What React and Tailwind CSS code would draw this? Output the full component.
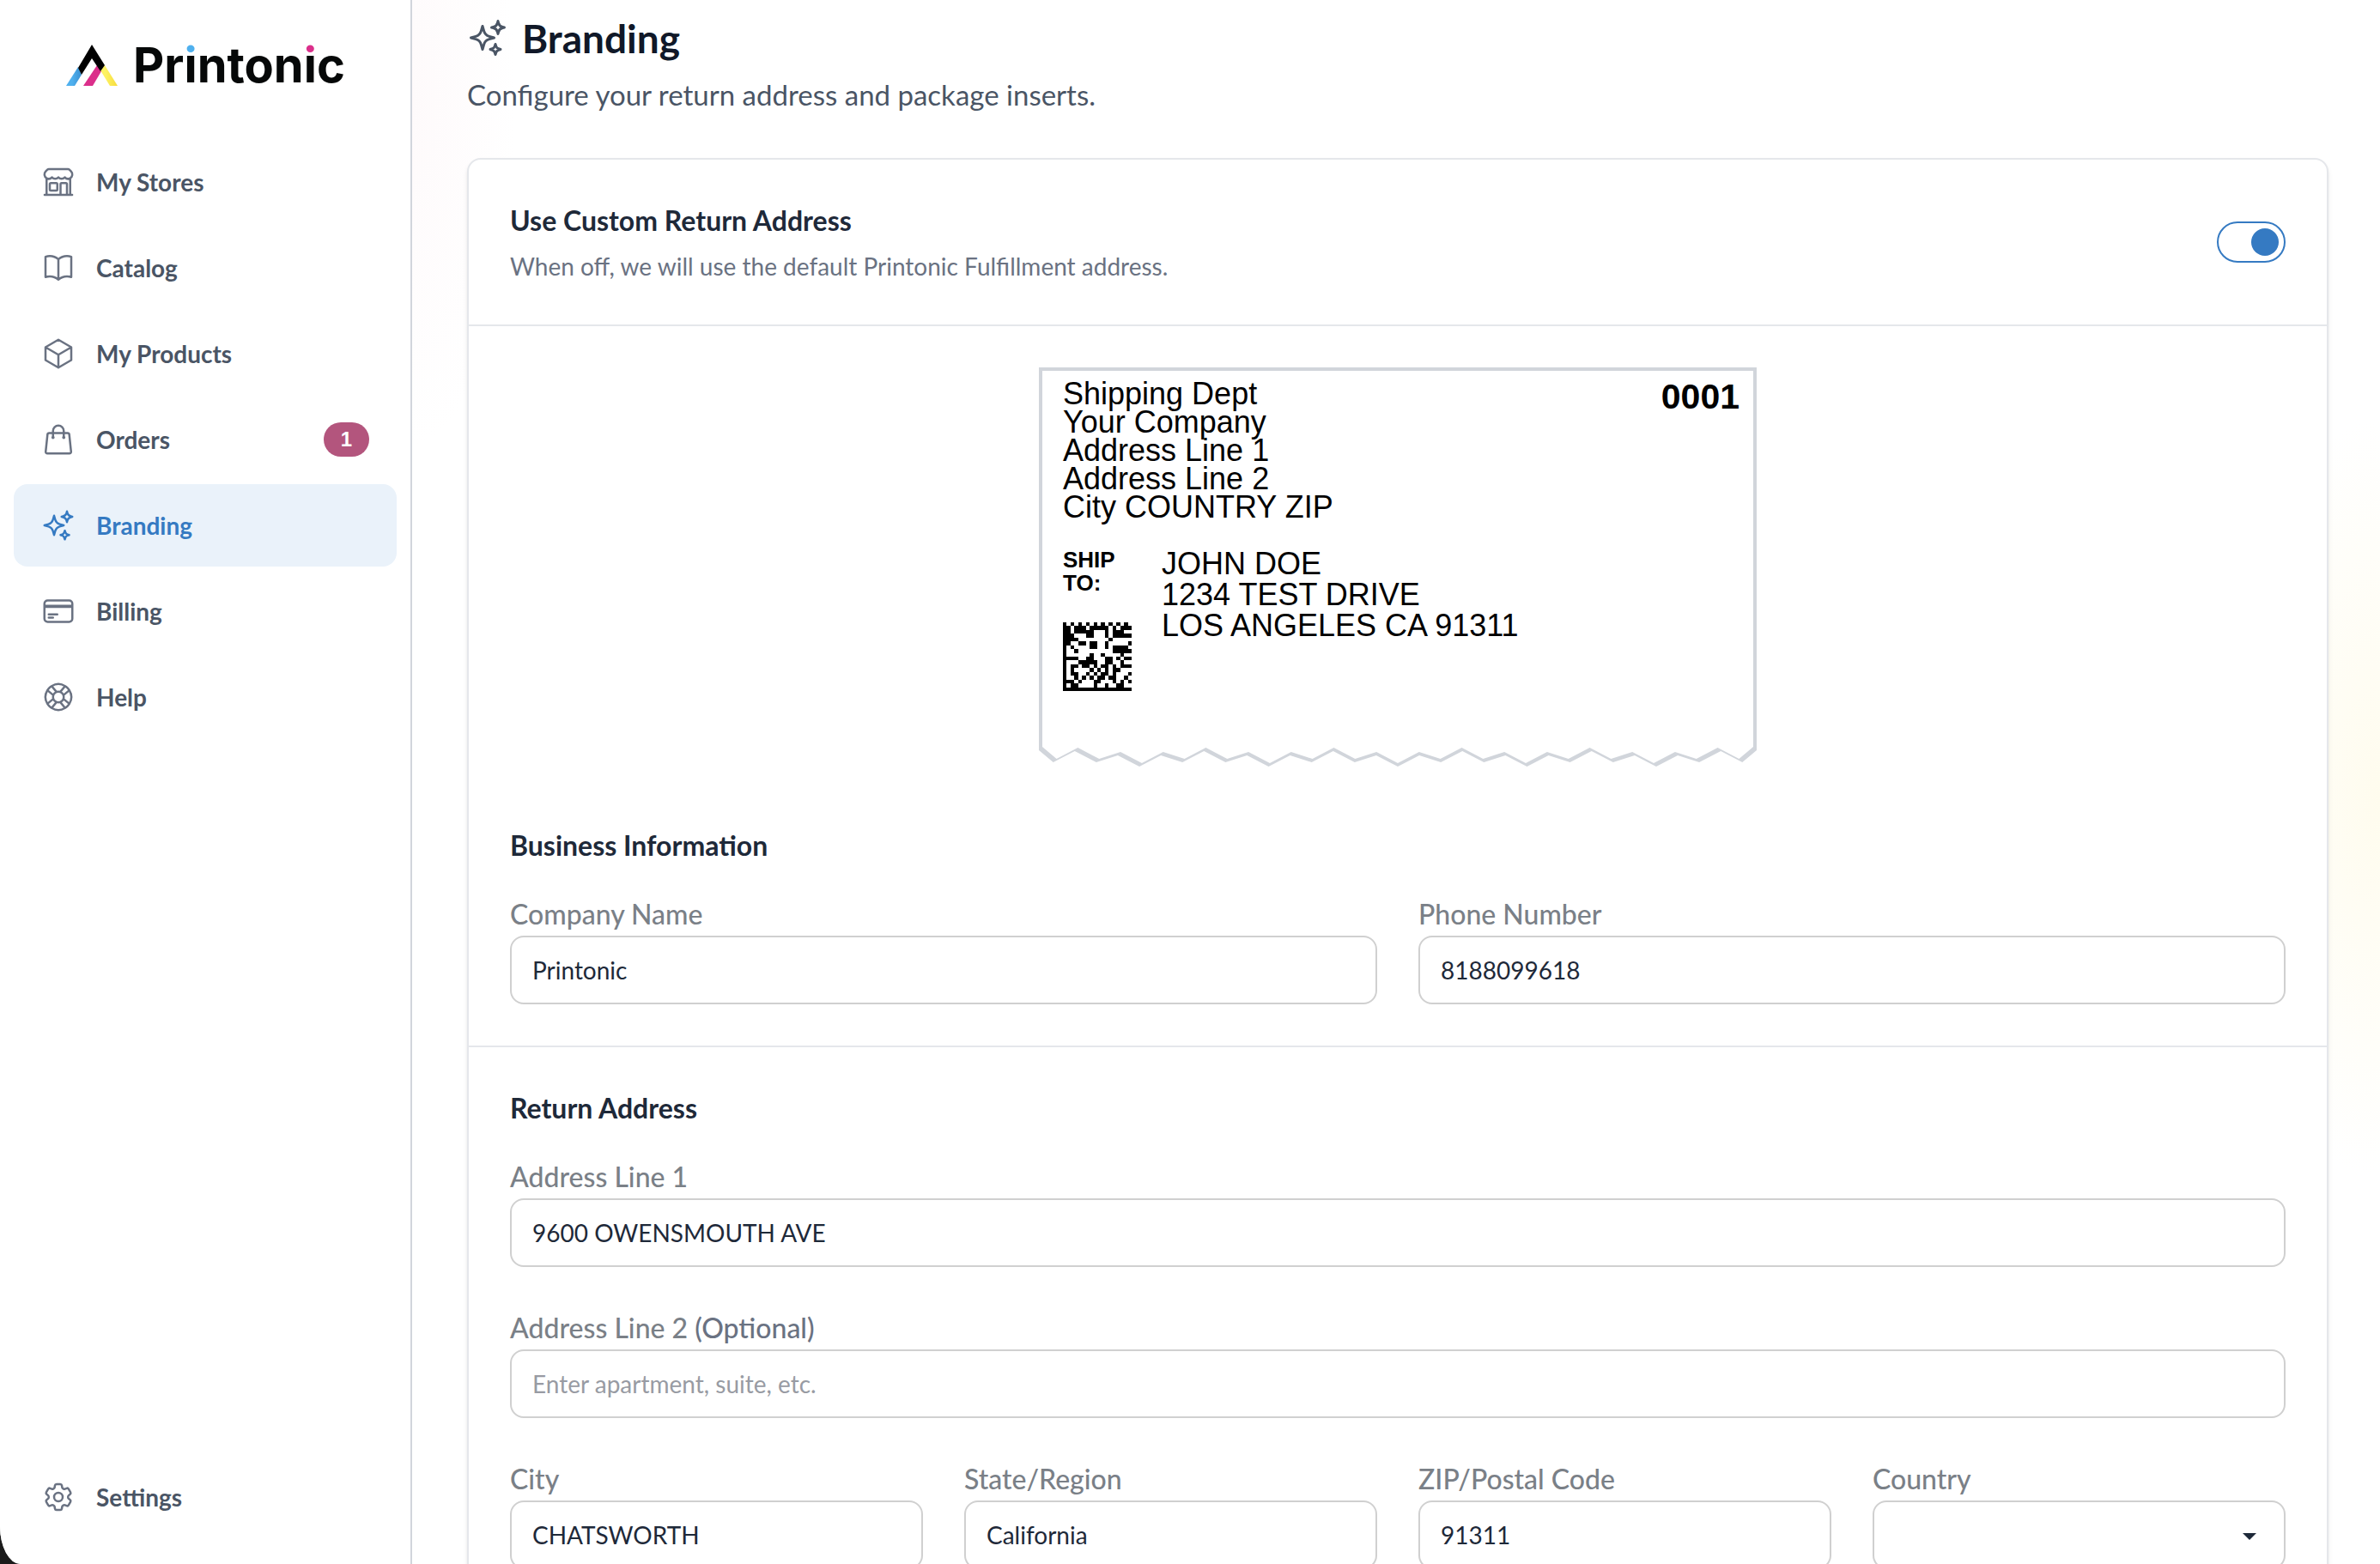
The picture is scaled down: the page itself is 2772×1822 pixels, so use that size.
import { useState } from 'react'
import {
  HiOutlineBookOpen,
  HiOutlineBuildingStorefront,
  HiOutlineCog6Tooth,
  HiOutlineCreditCard,
  HiOutlineCube,
  HiOutlineLifebuoy,
  HiOutlineShoppingBag,
  HiOutlineSparkles,
} from 'react-icons/hi2'

const NAV = [
  { id: 'stores',   label: 'My Stores',   Icon: HiOutlineBuildingStorefront },
  { id: 'catalog',  label: 'Catalog',     Icon: HiOutlineBookOpen },
  { id: 'products', label: 'My Products', Icon: HiOutlineCube },
  { id: 'orders',   label: 'Orders',      Icon: HiOutlineShoppingBag, count: 1 },
  { id: 'branding', label: 'Branding',    Icon: HiOutlineSparkles },
  { id: 'billing',  label: 'Billing',     Icon: HiOutlineCreditCard },
  { id: 'help',     label: 'Help',        Icon: HiOutlineLifebuoy },
]

const SENDER = ['Shipping Dept', 'Your Company', 'Address Line 1', 'Address Line 2', 'City COUNTRY ZIP']
const RECIPIENT = ['JOHN DOE', '1234 TEST DRIVE', 'LOS ANGELES CA 91311']

// Data matrix modules, one string per row
const MATRIX = [
  '101010101010101010',
  '110111011111010111',
  '110111110001011100',
  '111000110001011111',
  '111100000000100000',
  '110011011001000001',
  '101000011001011110',
  '100100000000011111',
  '100000010010000100',
  '111100110001101011',
  '100011111001100100',
  '101101101011010111',
  '101000010101011000',
  '101100101011010001',
  '100101010110110010',
  '111010001100010101',
  '101100001001001100',
  '111111111111111111',
]

// Torn paper edge: [x percent, depth]
const TEAR = Array.from({ length: 33 }, (_, i) => {
  const x = 2 + i * 3
  if (i % 2 === 0) return [x, (x - 14) % 18 === 0 ? 461 : 456]
  return [x, (x - 5) % 18 === 0 ? 443 : 448]
})

function tornPaper(left, top, width, drop) {
  const edge = TEAR.map(([x, y]) => `${left + (width * x) / 100},${y + drop}`).reverse()
  return [
    `${left},${top}`,
    `${left + width},${top}`,
    `${left + width},${442 + drop}`,
    ...edge,
    `${left},${442 + drop}`,
  ].join(' ')
}

function Logo() {
  return (
    <a href="#home" className="flex items-center gap-[18px] px-[77px] pt-12">
      <svg viewBox="0 0 60 48" className="h-12 w-15 shrink-0" aria-hidden="true">
        <defs>
          <linearGradient id="cyan" x1="0" x2="1">
            <stop offset="0.4" stopColor="#4fb0ee" />
            <stop offset="1" stopColor="#3a8fd0" />
          </linearGradient>
          <linearGradient id="yellow" x1="0" x2="1">
            <stop offset="0.3" stopColor="#fdf263" />
            <stop offset="1" stopColor="#f7dc3c" />
          </linearGradient>
        </defs>
        <path d="M14 26 L18 35 L10 48 H0 Z" fill="url(#cyan)" />
        <path d="M36 24 L41 31 L31 48 H20 Z" fill="#db2f8b" />
        <path d="M45 24 L60 48 H51 L40 30 Z" fill="url(#yellow)" />
        <path d="M30 0 L45 24 L40 31 L30 16 L18 35 L14 27 Z" fill="#000" />
      </svg>
      <span className="font-[Inter,sans-serif] text-[56px] leading-[56px] font-bold text-[#060808]">
        Pr
        <span className="bg-[linear-gradient(#4fb0ee_32%,#060808_32%)] bg-clip-text text-transparent">i</span>
        nton
        <span className="bg-[linear-gradient(#db2f8b_32%,#060808_32%)] bg-clip-text text-transparent">i</span>
        c
      </span>
    </a>
  )
}

function NavItem({ label, Icon, count, active, onClick }) {
  return (
    <button
      type="button"
      onClick={onClick}
      className={`flex h-24 w-full items-center gap-6 rounded-2xl px-8 text-left text-[28px] leading-10 font-bold
        ${active ? 'bg-[#eaf2fa] text-[#357ac2]' : 'text-gray-600'}`}
    >
      <Icon className={`size-10 shrink-0 ${active ? 'text-[#357ac2]' : 'text-gray-500'}`} />
      <span className="flex-1">{label}</span>
      {count && (
        <span className="flex h-10 w-[53px] items-center justify-center rounded-full bg-[#b3557d]
                         font-['Liberation_Sans',sans-serif] text-2xl font-bold text-white">
          {count}
        </span>
      )}
    </button>
  )
}

function Toggle({ checked, onChange }) {
  return (
    <input
      id="custom-address"
      type="checkbox"
      role="switch"
      checked={checked}
      onChange={onChange}
      className="flex h-12 w-20 shrink-0 cursor-pointer appearance-none items-center rounded-full border-2
                 border-gray-400 px-1.5 before:size-8 before:rounded-full before:bg-gray-400
                 checked:justify-end checked:border-[#357ac2] checked:before:bg-[#357ac2]"
    />
  )
}

function Field({ id, label, optional, ...props }) {
  return (
    <div className="flex min-w-0 flex-col">
      <FieldLabel id={id}>
        {label}
        {optional && <span className="text-gray-500"> (Optional)</span>}
      </FieldLabel>
      <input
        id={id}
        type="text"
        className="h-20 w-full rounded-2xl border-2 border-[#d0d0d0] bg-white px-6 text-[28px] text-gray-800
                   outline-none placeholder:text-[#989ba3] focus:border-[#357ac2]"
        {...props}
      />
    </div>
  )
}

function FieldLabel({ id, children }) {
  return (
    <label htmlFor={id} className="pb-0.5 text-[32px] leading-[46px] font-medium text-[#7a8087]">
      {children}
    </label>
  )
}

function ShippingLabel() {
  return (
    <div className="relative mx-auto h-[470px] w-[836px] font-['Liberation_Sans',sans-serif] text-black">
      <svg viewBox="0 0 836 470" className="absolute inset-0 size-full" aria-hidden="true">
        <polygon points={tornPaper(0, 0, 836, 4)} fill="#d1d5db" />
        <polygon points={tornPaper(4, 4, 828, 0)} fill="#fff" />
      </svg>
      <div className="relative flex flex-col gap-8 px-7 pt-[14px]">
        <div className="flex items-start justify-between">
          <div className="text-4xl leading-[33px]">
            {SENDER.map(line => <p key={line}>{line}</p>)}
          </div>
          <p className="-mr-2 text-[41px] leading-10 font-bold">0001</p>
        </div>
        <div className="flex">
          <div className="flex w-[115px] flex-col gap-8">
            <p className="text-[26px] leading-[27px] font-bold">SHIP<br />TO:</p>
            <svg viewBox="0 0 18 18" className="size-20" shapeRendering="crispEdges" aria-hidden="true">
              {MATRIX.map((row, y) =>
                [...row].map((cell, x) =>
                  cell === '1' && <rect key={`${x}-${y}`} x={x} y={y} width="1" height="1" />
                )
              )}
            </svg>
          </div>
          <div className="text-4xl leading-9">
            {RECIPIENT.map(line => <p key={line}>{line}</p>)}
          </div>
        </div>
      </div>
    </div>
  )
}

function SectionTitle({ children }) {
  return <h2 className="pb-0.5 text-[32px] leading-[46px] font-bold text-gray-800">{children}</h2>
}

export default function App() {
  const [page, setPage] = useState('branding')
  const [custom, setCustom] = useState(true)

  return (
    <div className="h-screen bg-[#1b1b1b] font-[Lato,sans-serif]">
      <div className="flex h-full overflow-hidden rounded-bl-[24px_44px] bg-white">

        {/* Sidebar */}
        <aside className="flex w-120 shrink-0 flex-col border-r-2 border-gray-300 bg-white">
          <Logo />
          <nav className="mt-15 flex flex-1 flex-col gap-1 px-4 pb-[30px]">
            {NAV.map(item => (
              <NavItem key={item.id} {...item} active={page === item.id} onClick={() => setPage(item.id)} />
            ))}
            <div className="mt-auto">
              <NavItem
                label="Settings"
                Icon={HiOutlineCog6Tooth}
                active={page === 'settings'}
                onClick={() => setPage('settings')}
              />
            </div>
          </nav>
        </aside>

        <main className="min-w-0 flex-1 overflow-y-auto pt-2 pr-15 pb-16 pl-16 [scrollbar-width:none]
                         bg-[radial-gradient(ellipse_200px_440px_at_100%_930px,#fffcee,transparent),radial-gradient(ellipse_120px_400px_at_0_120px,#fefafb,transparent)]">
          <header>
            <h1 className="flex h-18 items-center gap-4 text-[46px] font-bold text-gray-900">
              <HiOutlineSparkles className="size-12 text-gray-600" />
              Branding
            </h1>
            <p className="mt-1.5 text-[33px] leading-12 text-gray-600">
              Configure your return address and package inserts.
            </p>
          </header>

          <div className="mt-[50px] rounded-2xl border-2 border-gray-200 bg-white shadow-md">
            <section className="flex items-center justify-between border-b-2 border-gray-200 p-12">
              <div>
                <label
                  htmlFor="custom-address"
                  className="block pb-0.5 text-[32px] leading-[46px] font-bold text-gray-800"
                >
                  Use Custom Return Address
                </label>
                <p className="mt-2 text-[28px] leading-10 text-gray-500">
                  When off, we will use the default Printonic Fulfillment address.
                </p>
              </div>
              <Toggle checked={custom} onChange={e => setCustom(e.target.checked)} />
            </section>

            <section className="border-b-2 border-gray-200 p-12">
              <ShippingLabel />
              <div className="mt-16 flex flex-col gap-8">
                <SectionTitle>Business Information</SectionTitle>
                <div className="grid grid-cols-2 gap-12">
                  <Field id="company" label="Company Name" defaultValue="Printonic" />
                  <Field id="phone" label="Phone Number" defaultValue="8188099618" />
                </div>
              </div>
            </section>

            <section className="flex flex-col gap-8 p-12">
              <SectionTitle>Return Address</SectionTitle>
              <div className="flex flex-col gap-12">
                <Field id="line1" label="Address Line 1" defaultValue="9600 OWENSMOUTH AVE" />
                <Field id="line2" label="Address Line 2" optional placeholder="Enter apartment, suite, etc." />
                <div className="grid grid-cols-4 gap-12">
                  <Field id="city" label="City" defaultValue="CHATSWORTH" />
                  <Field id="state" label="State/Region" defaultValue="California" />
                  <Field id="zip" label="ZIP/Postal Code" defaultValue="91311" />
                  <div className="flex min-w-0 flex-col">
                    <FieldLabel id="country">Country</FieldLabel>
                    <div className="relative">
                      <select
                        id="country"
                        defaultValue=""
                        className="h-20 w-full appearance-none rounded-2xl border-2 border-[#d0d0d0] bg-white
                                   px-6 text-[28px] text-gray-800 outline-none"
                      >
                        <option value="" />
                      </select>
                      <svg
                        viewBox="0 0 16 8"
                        className="pointer-events-none absolute top-[38px] right-[34px] h-2 w-4 text-gray-800"
                        aria-hidden="true"
                      >
                        <path d="M0 0 H16 L8 8 Z" fill="currentColor" />
                      </svg>
                    </div>
                  </div>
                </div>
              </div>
            </section>
          </div>
        </main>
      </div>
    </div>
  )
}
